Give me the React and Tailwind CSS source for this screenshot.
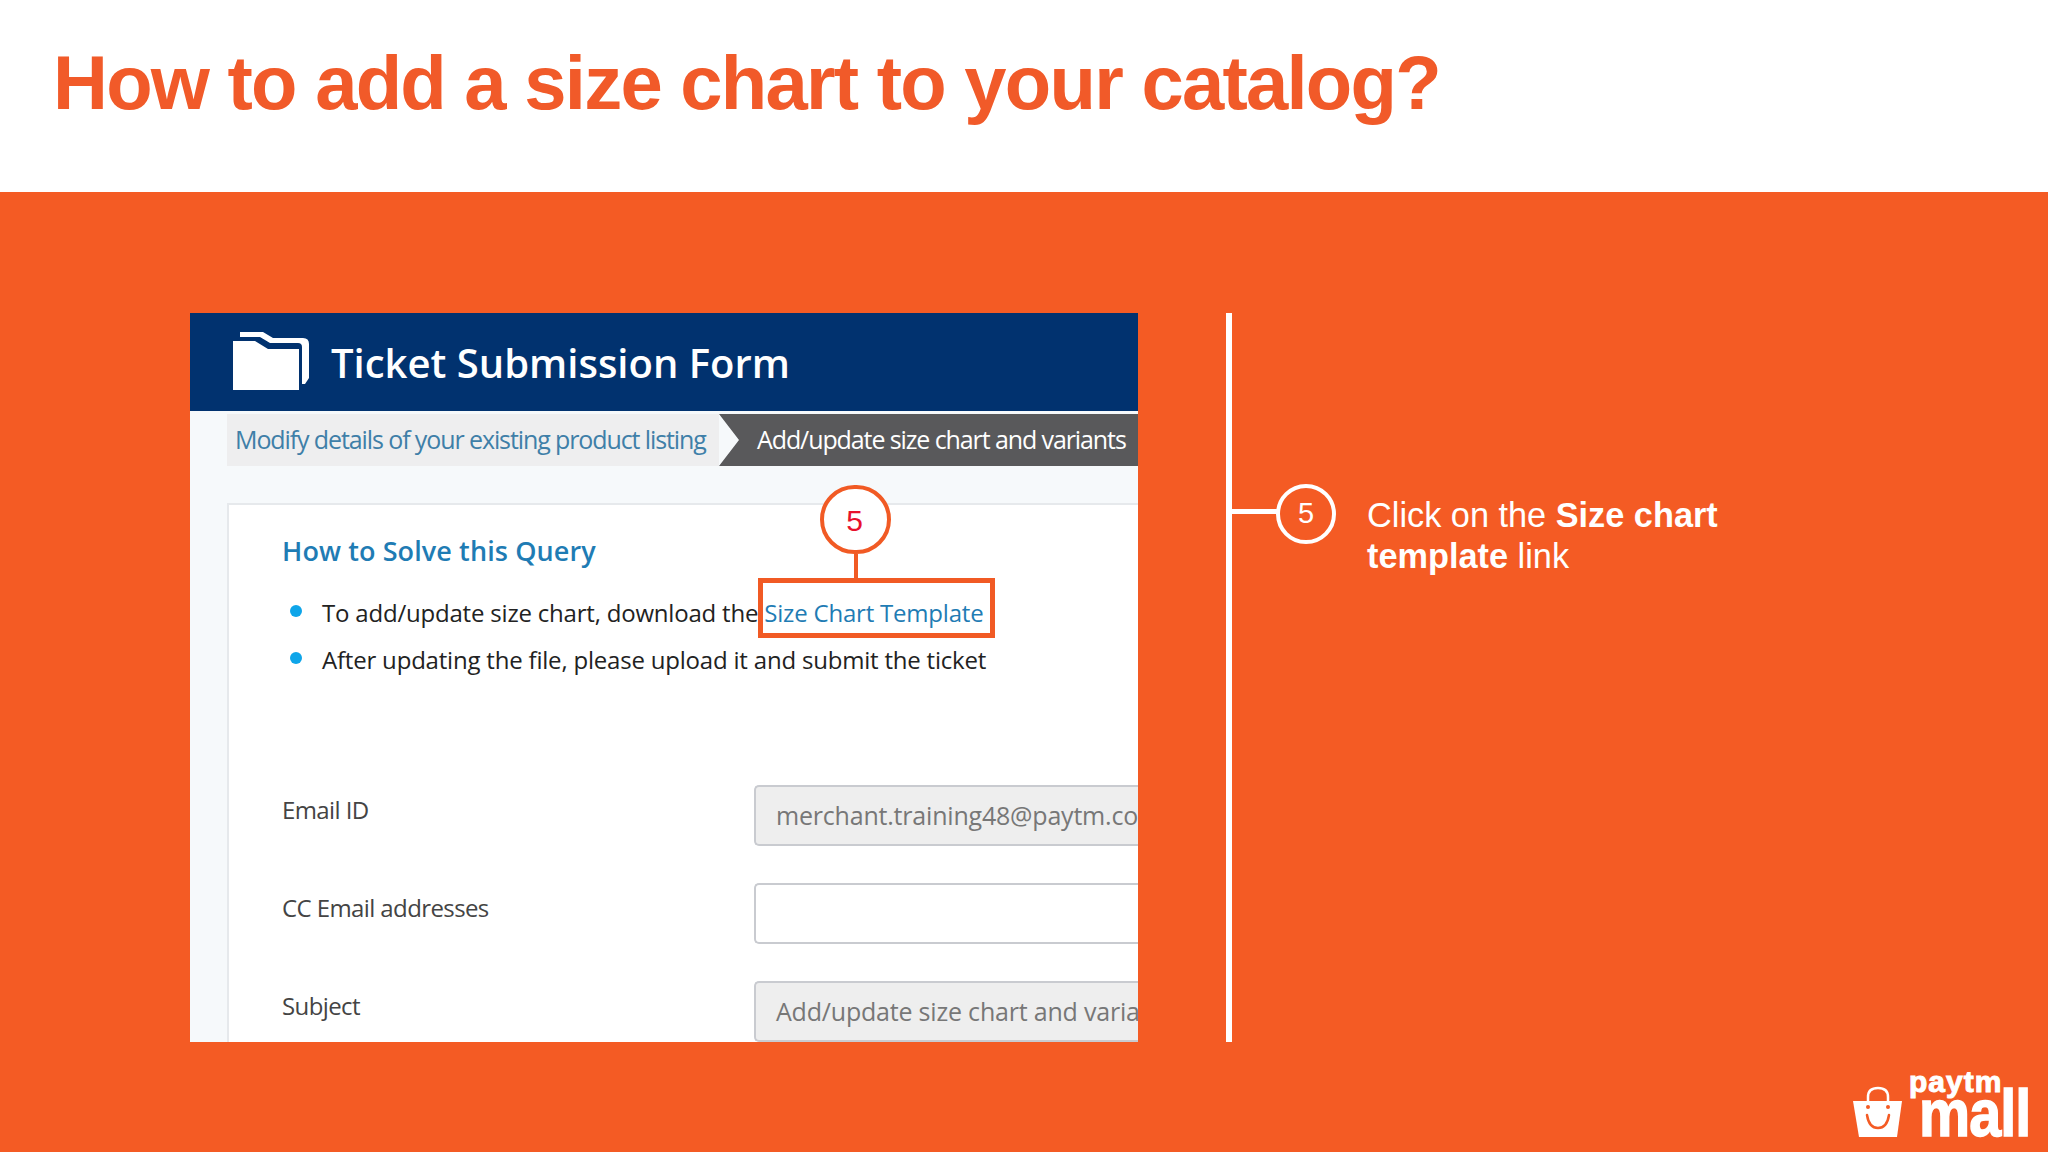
const fieldRows = [
  { label: 'Email ID', value: 'merchant.training48@paytm.com', disabled: true },
  { label: 'CC Email addresses', value: '', disabled: false },
  { label: 'Subject', value: 'Add/update size chart and variants', disabled: true },
];

function FolderIcon() {
  return (
    <svg width="78" height="60" viewBox="0 0 78 60" className="shrink-0">
      <path d="M7 0 H30 L40 6 H70 Q76 6 76 12 V46 L72 52 H69 V15 Q69 11 65 11 H37 L27 5 H7 Z" fill="#ffffff" />
      <path d="M0 9 H22 L35 17 H66 V58 H0 Z" fill="#ffffff" />
    </svg>
  );
}

function PaytmMallLogo() {
  return (
    <div className="absolute left-[1853px] top-[1072px] w-[180px] h-[70px] text-white font-['Liberation_Sans',sans-serif] font-bold">
      <svg width="50" height="52" viewBox="0 0 50 52" className="absolute left-0 top-[14px]">
        <path d="M15 16 V11 Q15 2 25 2 Q35 2 35 11 V16" fill="none" stroke="#ffffff" strokeWidth="2.5" />
        <path d="M0 15 H49 L44 51 H6 Z" fill="#ffffff" />
        <circle cx="15" cy="21" r="2" fill="#f45b24" />
        <circle cx="35" cy="21" r="2" fill="#f45b24" />
        <path d="M14 29 Q16 42 25 42 Q34 42 36 29" fill="none" stroke="#f45b24" strokeWidth="2.5" strokeLinecap="round" />
      </svg>
      <span className="absolute left-[56px] top-0 text-[30px] leading-[20px] tracking-[1px] [-webkit-text-stroke:1px_white]">paytm</span>
      <span className="absolute left-[66px] top-[21px] text-[66px] leading-[40px] tracking-[-1px] origin-left scale-x-[0.87] [-webkit-text-stroke:1.5px_white]">mall</span>
    </div>
  );
}

function TicketPanel() {
  return (
    <div className="relative w-[948px] h-[729px] shrink-0 overflow-hidden bg-[#f6f9fb] font-['Open_Sans',sans-serif]">
      <div className="flex items-center h-[98px] bg-[#01326f] pl-[43px] gap-[20px]">
        <FolderIcon />
        <span className="text-white text-[40px] font-semibold leading-none pt-[2px]">Ticket Submission Form</span>
      </div>

      <div className="flex h-[52px] mt-[3px] ml-[37px] text-[25px] tracking-[-1.1px]">
        <div className="flex items-center w-[492px] pl-[8px] bg-[#eeeeef] text-[#3f7fa8]">
          Modify details of your existing product listing
        </div>
        <div className="flex items-center flex-1 pl-[38px] bg-[#59595b] text-white whitespace-nowrap [clip-path:polygon(0_0,100%_0,100%_100%,0_100%,20px_50%)]">
          Add/update size chart and variants
        </div>
      </div>

      <div className="ml-[37px] mt-[37px] h-[600px] bg-white border-t-2 border-l-2 border-[#e6e9ec] pl-[53px]">
        <h2 className="mt-[27px] text-[27px] font-semibold leading-[38px] tracking-[0.1px] text-[#1f7cb4]">How to Solve this Query</h2>

        <ul className="mt-[28px] flex flex-col gap-[17px] text-[24px] leading-[30px] text-[#222222] tracking-[-0.2px]">
          <li className="flex items-center">
            <span className="w-[12px] h-[12px] rounded-full bg-[#0ea5e9] ml-[8px] mr-[20px] mb-[4px]" />
            To add/update size chart, download the&nbsp;<span className="text-[#1f7cb4]">Size Chart Template</span>
          </li>
          <li className="flex items-center">
            <span className="w-[12px] h-[12px] rounded-full bg-[#0ea5e9] ml-[8px] mr-[20px] mb-[4px]" />
            After updating the file, please upload it and submit the ticket
          </li>
        </ul>

        <div className="mt-[110px] flex flex-col gap-[37px]">
          {fieldRows.map((row) => (
            <div key={row.label} className="flex items-start h-[61px]">
              <span className="w-[472px] shrink-0 pt-[10px] text-[24px] leading-[30px] text-[#444444] tracking-[-0.6px]">{row.label}</span>
              <div className={`flex-1 h-[61px] pl-[20px] flex items-center rounded-l-[5px] border-2 border-r-0 border-[#c9cbd0] text-[25px] tracking-[-0.2px] text-[#777777] whitespace-nowrap overflow-hidden ${row.disabled ? 'bg-[#eeeeee]' : 'bg-white'}`}>
                {row.value}
              </div>
            </div>
          ))}
        </div>
      </div>

      {/* step marker lying over the form */}
      <div className="absolute left-[630px] top-[172px] w-[71px] h-[69px] rounded-full border-[4px] border-[#f15a24] bg-white flex items-center justify-center font-['Liberation_Sans',sans-serif] text-[30px] text-[#e8112d]">
        <span className="-ml-[2px] pt-[1px]">5</span>
      </div>
      <div className="absolute left-[664px] top-[241px] w-[4px] h-[26px] bg-[#f15a24]" />
      <div className="absolute left-[568px] top-[265px] w-[237px] h-[60px] border-[5px] border-[#f15a24]" />
    </div>
  );
}

export default function App() {
  return (
    <div className="relative w-[2048px] h-[1152px] overflow-hidden flex flex-col bg-[#f45b24] font-['Liberation_Sans',sans-serif]">
      <header className="h-[192px] shrink-0 bg-white pl-[53px] pt-[41px]">
        <h1 className="text-[76px] leading-[84px] font-bold text-[#f15a29] tracking-[-1.75px] whitespace-nowrap">
          How to add a size chart to your catalog?
        </h1>
      </header>

      <main className="flex-1 flex items-start pl-[190px] pt-[121px]">
        <TicketPanel />
        <div className="w-[6px] h-[729px] ml-[88px] bg-white shrink-0" />
        <div className="flex items-start mt-[172px]">
          <div className="w-[45px] h-[5px] mt-[24px] bg-white" />
          <div className="w-[60px] h-[60px] -ml-[1px] -mt-[1px] rounded-full border-[4px] border-white flex items-center justify-center text-[29px] text-white">
            5
          </div>
          <p className="ml-[31px] mt-[10px] w-[380px] text-[34.3px] leading-[41px] text-white">
            Click on the <b>Size chart template</b> link
          </p>
        </div>
      </main>

      <PaytmMallLogo />
    </div>
  );
}
